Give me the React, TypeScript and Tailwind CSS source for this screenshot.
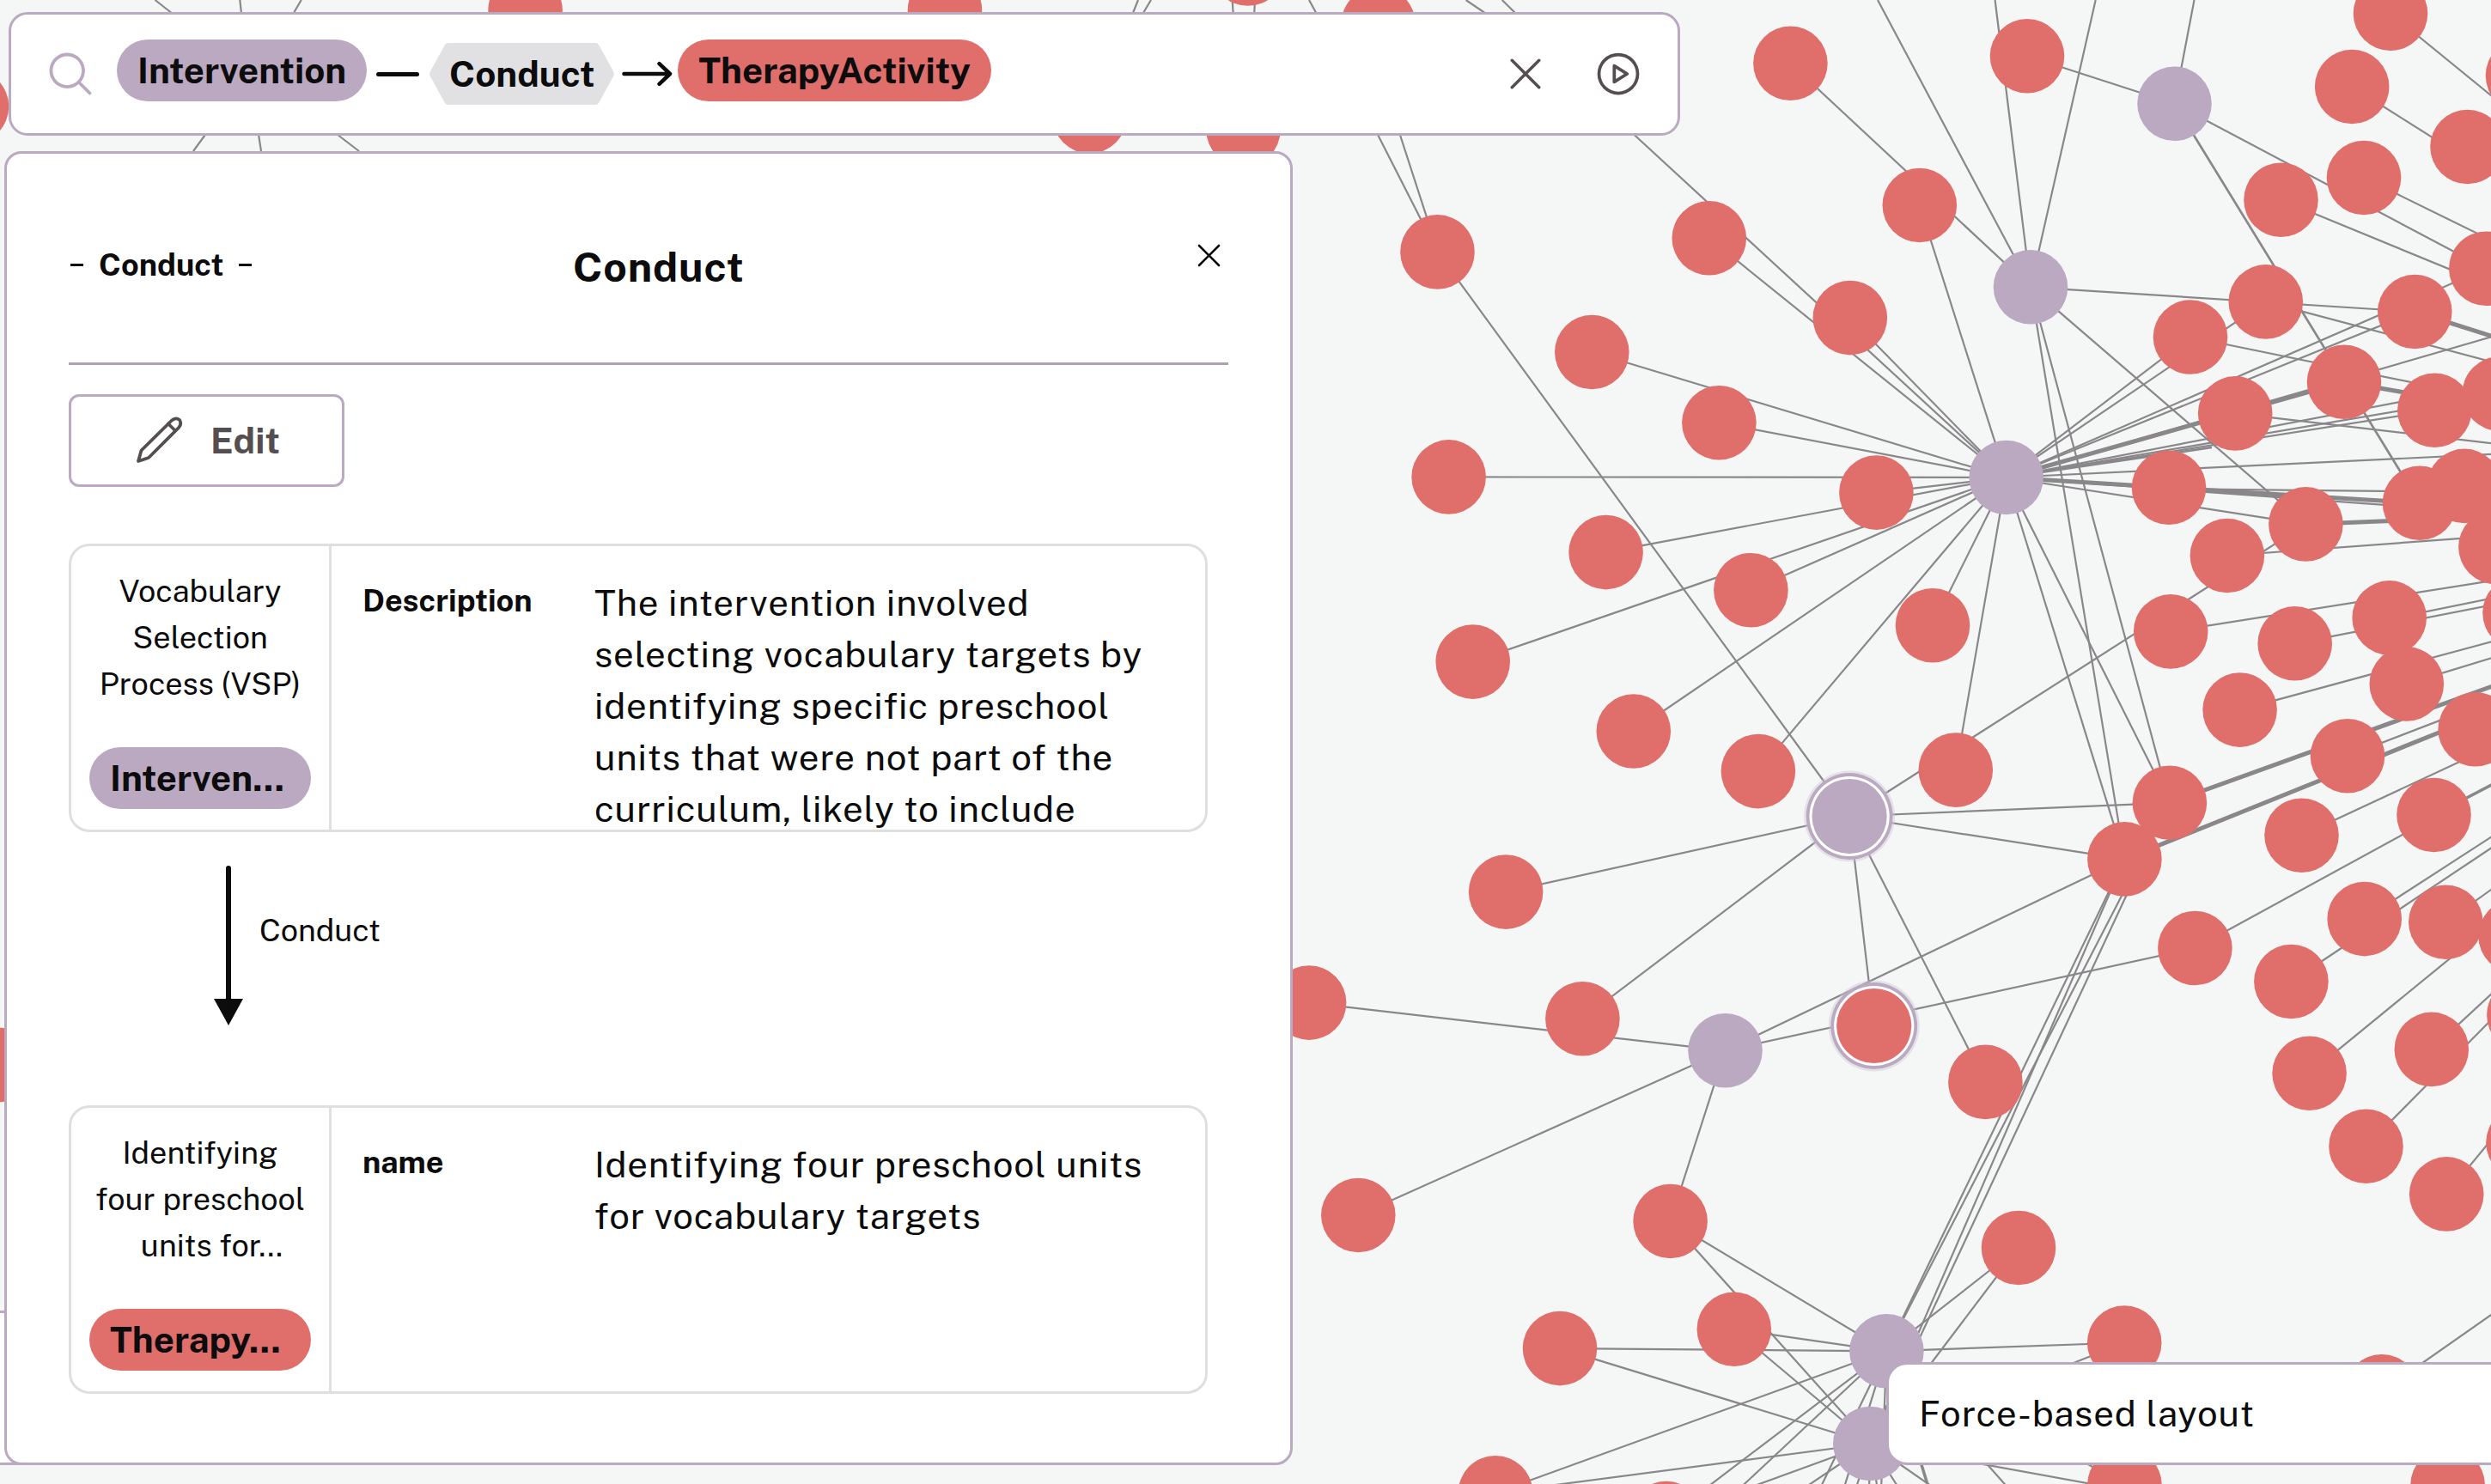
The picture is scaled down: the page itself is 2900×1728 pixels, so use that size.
import React from 'react';
import { PiMagnifyingGlass, PiPlayCircle, PiX } from 'react-icons/pi';

type Point = [number, number];
type Edge = [number, number, number, number, number?];

const RADIUS = 43.3;

const interventions: Point[] = [
  [2531.5, 120.8],
  [2364, 334.3],
  [2335.7, 556],
  [2008.5, 1223.3],
  [2196.4, 1573.3],
  [2177.3, 1681],
];

const activities: Point[] = [
  [-33, 124], [1, 1240], [611.6, 12], [1100, 12], [1452.8, -36.5], [1604.6, 28],
  [1268.5, 135.5], [1447.5, 151], [1673.5, 293.4], [1853.3, 410], [1989.8, 277.3],
  [2084.4, 73.8], [2360, 65.3], [2783, 15.7], [2738.2, 101], [2872.5, 171],
  [2937, 88], [2752, 207], [2655.5, 232.7], [2234.8, 239], [2637.8, 351.4],
  [2550, 392.5], [2811.3, 363], [2894.3, 312.7], [2153.8, 370.1], [2001.4, 492.3],
  [1686.6, 555.4], [1869.6, 643.1], [2184.4, 573.6], [2038.4, 687.2], [1714.7, 770.6],
  [1901.8, 851.5], [2046.9, 898.1], [1753.1, 1038.6], [2602.2, 481.4], [2729, 444.8],
  [2834.3, 477.8], [2909.7, 458.5], [2525, 567.8], [2684.4, 610.4], [2817, 585.8],
  [2869, 565.9], [2592.9, 647], [2905.4, 637], [2250, 728.2], [2527.2, 735.4],
  [2671.7, 749.3], [2781.7, 719.4], [2933.5, 713.6], [2801.8, 796.4], [2607.6, 826.6],
  [2276.8, 896.6], [2733, 880.2], [2881.7, 849.2], [2525.9, 934.8], [2473.4, 1000.4],
  [2679.5, 972.7], [2833.5, 949], [2555.4, 1104], [2667.4, 1143], [2752.7, 1070.1],
  [2847.3, 1073.8], [2928.6, 1090], [2311.4, 1259.9], [2688.6, 1249.8], [2830.8, 1221.9],
  [2938.4, 1182], [2754.5, 1334.8], [2848.2, 1390.4], [2937.5, 1330.5], [2350, 1453],
  [2473.2, 1563.5], [2772.8, 1620.3], [2473.4, 1729], [2849.6, 1729], [1524.1, 1167.6],
  [1842.4, 1186.2], [1581.3, 1415], [1944.6, 1422], [2018.8, 1547.8], [1816, 1570.1],
  [1741, 1738.2], [1939.7, 1768],
];

const edges: Edge[] = [
  // behind the search bar
  [180.5, 0, 206, 20], [279.3, 0, 281.5, 20], [350.8, 0, 339, 20],
  [244, 150, 225, 176], [300, 150, 304, 176], [384, 150, 418, 176],
  [1325, 0, 1317, 20], [1340, 0, 1328, 20], [1434.6, 0, 1436, 20], [1461, 0, 1460, 20],
  [1524, 0, 1535, 20], [1706.6, 0, 1736, 20], [1748.7, 0, 1769, 20],
  [1600, 149, 1673.5, 293.4], [1626, 145, 1674, 293],
  // upper right cluster
  [2531.5, 120.8, 2360, 65.3], [2531.5, 120.8, 2554.5, 0], [2531.5, 120.8, 2894.3, 312.7],
  [2531.5, 120.8, 2817, 585.8, 2.7], [2752, 207, 2970, 314], [2783, 15.7, 2960, 160],
  [2738.2, 101, 2960, 241], [2655.5, 232.7, 2960, 358],
  // second intervention
  [2364, 334.3, 2186, 0], [2364, 334.3, 2322.6, 0], [2364, 334.3, 2439.7, 0],
  [2364, 334.3, 2084.4, 73.8], [2364, 334.3, 2811.3, 363], [2364, 334.3, 2684.4, 610.4],
  [2364, 334.3, 2473.4, 1000.4], [2364, 334.3, 2525.9, 934.8],
  // main hub, left side
  [2335.7, 556, 2234.8, 239], [2335.7, 556, 1989.8, 277.3], [2335.7, 556, 1882, 138],
  [2335.7, 556, 2153.8, 370.1], [2335.7, 556, 1853.3, 410], [2335.7, 556, 2001.4, 492.3],
  [2335.7, 556, 1686.6, 555.4], [2335.7, 556, 1869.6, 643.1], [2335.7, 556, 2184.4, 573.6],
  [2335.7, 556, 1714.7, 770.6], [2335.7, 556, 2038.4, 687.2], [2335.7, 556, 1901.8, 851.5],
  [2335.7, 556, 2046.9, 898.1], [2335.7, 556, 2250, 728.2], [2335.7, 556, 2276.8, 896.6],
  [2335.7, 556, 2473.4, 1000.4], [2335.7, 556, 2525.9, 934.8],
  // main hub, right side
  [2335.7, 556, 2550, 392.5], [2335.7, 556, 2637.8, 351.4], [2335.7, 556, 2894.3, 312.7],
  [2335.7, 556, 2811.3, 363], [2335.7, 556, 2960, 375], [2335.7, 556, 2729, 444.8, 5],
  [2335.7, 556, 2960, 436], [2335.7, 556, 2909.7, 458.5], [2335.7, 556, 2834.3, 477.8],
  [2335.7, 556, 2575, 521, 2.5], [2335.7, 556, 2960, 526], [2335.7, 556, 2817, 585.8, 5],
  [2335.7, 556, 2817, 591], [2335.7, 556, 2684.4, 610.4], [2525, 569.2, 2869, 573],
  [2684.4, 610.4, 2900, 602, 5], [2602.2, 481.4, 2960, 523], [2729, 444.8, 2909.7, 476, 5],
  [2550, 392.5, 2909.7, 466], [2637.8, 351.4, 2960, 437], [2811.3, 363, 2960, 410, 5],
  // right cluster
  [2592.9, 647, 2960, 620], [2527.2, 735.4, 2960, 667], [2671.7, 749.3, 2960, 693],
  [2781.7, 721, 2960, 684.5], [2607.6, 826.6, 2960, 731], [2801.8, 796.4, 2960, 748],
  [2525.9, 934.8, 2960, 778, 5], [2733, 880.2, 2960, 793], [2473.4, 1000.4, 2881.7, 836, 5],
  [2679.5, 972.7, 2960, 842], [2833.5, 949, 2960, 883, 3.5], [2555.4, 1104, 2833.5, 952],
  [2667.4, 1143, 2960, 947.5], [2752.7, 1070.1, 2960, 936], [2847.3, 1073.8, 2960, 993],
  [2688.6, 1249.8, 2960, 1028], [2830.8, 1221.9, 2960, 1102], [2754.5, 1334.8, 2938.4, 1149],
  [2848.2, 1390.4, 2940, 1279], [2772.8, 1620.3, 2960, 1489],
  // selected intervention
  [2153.1, 950.5, 1673.5, 293.4], [2153.1, 950.5, 1753.1, 1038.6], [2153.1, 950.5, 1842.4, 1186.2],
  [2153.1, 950.5, 2181.7, 1194.5], [2153.1, 950.5, 2311.4, 1259.9], [2153.1, 950.5, 2473.4, 1000.4],
  [2153.1, 950.5, 2525.9, 934.8], [2153.1, 950.5, 2684.4, 610.4],
  // lower interventions
  [2008.5, 1223.3, 1524.1, 1167.6], [2008.5, 1223.3, 1581.3, 1415], [2008.5, 1223.3, 1944.6, 1422],
  [2008.5, 1223.3, 2555.4, 1104], [2008.5, 1223.3, 2473.4, 1000.4],
  [2196.4, 1573.3, 1944.6, 1422], [2196.4, 1573.3, 2018.8, 1547.8], [2196.4, 1573.3, 1816, 1570.1],
  [2196.4, 1573.3, 1741, 1738.2], [2196.4, 1573.3, 1939.7, 1768], [2196.4, 1573.3, 1988, 1768],
  [2196.4, 1573.3, 2118, 1735], [2196.4, 1573.3, 2146, 1735], [2196.4, 1573.3, 2190, 1735],
  [2196.4, 1573.3, 2350, 1453], [2196.4, 1573.3, 2473.2, 1563.5], [2196.4, 1573.3, 2473.4, 1000.4],
  [2196.4, 1573.3, 2525.9, 934.8], [2196.4, 1573.3, 2473.4, 1729], [2196.4, 1573.3, 2340, 1735],
  [2196.4, 1573.3, 2246, 1735, 3.5],
  [2177.3, 1681, 1944.6, 1422], [2177.3, 1681, 2018.8, 1547.8], [2177.3, 1681, 1816, 1570.1],
  [2177.3, 1681, 1741, 1738.2], [2177.3, 1681, 2040, 1731], [2177.3, 1681, 2100, 1733],
  [2177.3, 1681, 2350, 1453], [2177.3, 1681, 2473.2, 1563.5], [2177.3, 1681, 2473.4, 1000.4],
  [2177.3, 1681, 2525.9, 934.8], [2177.3, 1681, 2255, 1735], [2177.3, 1681, 2473.4, 1735],
  [2177.3, 1681, 2212, 1735], [2177.3, 1681, 2160, 1735], [2177.3, 1681, 2176, 1735], [2177.3, 1681, 2186, 1735],
];

function Graph() {
  return (
    <svg className="absolute inset-0" width={2900} height={1728} viewBox="0 0 2900 1728">
      <g stroke="#89878a">
        {edges.map(([x1, y1, x2, y2, w = 2.2], i) => (
          <line key={i} x1={x1} y1={y1} x2={x2} y2={y2} strokeWidth={w} />
        ))}
      </g>
      {activities.map(([x, y], i) => (
        <circle key={i} cx={x} cy={y} r={RADIUS} fill="#e06e6b" />
      ))}
      {interventions.map(([x, y], i) => (
        <circle key={i} cx={x} cy={y} r={RADIUS} fill="#baa9c1" />
      ))}
      <SelectedNode x={2153.1} y={950.5} color="#baa9c1" />
      <SelectedNode x={2181.7} y={1194.5} color="#e06e6b" />
    </svg>
  );
}

function SelectedNode({ x, y, color }: { x: number; y: number; color: string }) {
  return (
    <g>
      <circle cx={x} cy={y} r={53} fill="#cfc8d3" opacity={0.45} />
      <circle cx={x} cy={y} r={50.4} fill="#baa9c1" />
      <circle cx={x} cy={y} r={46.6} fill="#ffffff" />
      <circle cx={x} cy={y} r={43.6} fill={color} />
    </g>
  );
}

function SearchBar() {
  return (
    <div className="absolute left-[10px] top-[14px] flex h-[144px] w-[1946px] items-center rounded-[22px] border-[3px] border-[#baa9c1] bg-white pl-[39px] pr-[39px] text-[42px] font-bold leading-none">
      <PiMagnifyingGlass size={60} color="#baa9c1" />
      <div className="-mt-2 ml-6 flex h-[72px] items-center rounded-full bg-[#baa9c1] px-6">Intervention</div>
      <div className="ml-[11px] h-[5px] w-[50px] rounded-full bg-[#0c0c0d]" />
      <div className="relative ml-[12px] flex h-[72px] w-[215px] items-center justify-center">
        <svg className="absolute inset-0" width={215} height={72} viewBox="0 0 215 72">
          <path d="M22 0H193Q196 0 197.500 3L214 33Q215.500 36 214 39L197.500 69Q196 72 193 72H22Q19 72 17.500 69L1 39Q-.5 36 1 33L17.500 3Q19 0 22 0Z" fill="#e1e0e2" />
        </svg>
        <span className="relative">Conduct</span>
      </div>
      <svg className="ml-[8px]" width={60} height={32} viewBox="0 0 60 32" fill="none" stroke="#0c0c0d" strokeWidth={4.5} strokeLinecap="round" strokeLinejoin="round">
        <path d="M3.500 16H57M44.500 4.200L57 16L44.500 27.800" />
      </svg>
      <div className="-mt-2 ml-[6px] flex h-[72px] items-center rounded-full bg-[#e06e6b] px-6">TherapyActivity</div>
      <PiX className="ml-auto" size={56} color="#544e50" />
      <PiPlayCircle className="ml-[50px]" size={60} color="#544e50" />
    </div>
  );
}

type EntityProps = {
  title: React.ReactNode;
  tag: string;
  tagClass: string;
  field: string;
  children: React.ReactNode;
};

function EntityCard({ title, tag, tagClass, field, children }: EntityProps) {
  return (
    <div className="flex h-[336px] w-[1326px] overflow-hidden rounded-[24px] border-[3px] border-[#dfdfdf]">
      <div className="flex w-[303px] shrink-0 flex-col justify-between border-r-[3px] border-[#dfdfdf] pb-[24px] pl-[21px] pr-[21px] pt-[25px]">
        <div className="text-center text-[36px] leading-[54px] whitespace-nowrap">{title}</div>
        <div className={`flex h-[72px] w-[258px] items-center rounded-full px-6 text-[42px] font-bold leading-none ${tagClass}`}>{tag}</div>
      </div>
      <div className="w-[270px] shrink-0 pl-[36px] pt-[36px] text-[36px] font-bold leading-[54px]">{field}</div>
      <div className="whitespace-nowrap pl-[36px] pt-[36px] text-[42px] leading-[60px] tracking-[0.8px]">{children}</div>
    </div>
  );
}

function DetailPanel() {
  return (
    <div className="absolute left-[5px] top-[176px] flex h-[1530px] w-[1500px] flex-col rounded-[20px] border-[3px] border-[#baa9c1] bg-white pl-[72px] pr-[72px]">
      <div className="flex h-[246px] w-[1350px] shrink-0 items-start border-b-[3px] border-[#ada0b1] pl-[2px]">
        <div className="mt-[99px] flex h-[60px] w-[585px] items-center gap-[18px] text-[36px] font-bold">
          <span className="h-[3px] w-[15px] bg-[#0c0c0d]" />
          <span>Conduct</span>
          <span className="h-[3px] w-[15px] bg-[#0c0c0d]" />
        </div>
        <h2 className="mt-[102px] text-[48px] font-bold leading-[60px] tracking-[0.8px]">Conduct</h2>
        <PiX className="ml-auto mr-[2px] mt-[98px]" size={41} />
      </div>
      <button className="mt-[34px] flex h-[108px] w-[321px] shrink-0 items-center rounded-[12px] border-[3px] border-[#baa9c1] pl-[73px] text-[42px] font-bold text-[#544e50]">
        <svg width={58} height={58} viewBox="0 0 58 58" fill="none" stroke="#544e50" strokeWidth={3.8} strokeLinecap="round" strokeLinejoin="round">
          <path d="M5 53L8.500 40.500L44 5.500Q48.500 1.500 53 5Q56 9.500 52 14L17 49Z" />
          <path d="M40 9.500L48 17.500" />
        </svg>
        <span className="-mt-[2px] ml-[31px]">Edit</span>
      </button>
      <div className="mt-[66px]">
        <EntityCard
          title={<>Vocabulary<br />Selection<br />Process (VSP)</>}
          tag="Interven..."
          tagClass="bg-[#baa9c1]"
          field="Description"
        >
          The intervention involved<br />
          selecting vocabulary targets by<br />
          identifying specific preschool<br />
          units that were not part of the<br />
          curriculum, likely to include
        </EntityCard>
      </div>
      <div className="flex h-[318px] items-start pl-[168px] pt-[38px]">
        <svg width={36} height={190} viewBox="0 0 36 190">
          <path d="M18 4V158" stroke="#0c0c0d" strokeWidth={6} strokeLinecap="round" />
          <path d="M1 156H35L18 187Z" fill="#0c0c0d" />
        </svg>
        <span className="ml-[18px] mt-[49px] text-[36px] leading-[54px]">Conduct</span>
      </div>
      <EntityCard
        title={<>Identifying<br />four preschool<br /><span className="pl-[27px]">units for...</span></>}
        tag="Therapy..."
        tagClass="bg-[#e06e6b]"
        field="name"
      >
        Identifying four preschool units<br />
        for vocabulary targets
      </EntityCard>
    </div>
  );
}

export default function App() {
  return (
    <div className="relative h-[1728px] w-[2900px] overflow-hidden bg-[#f5f7f7] font-['Public_Sans','Inter',sans-serif] text-[#0c0c0d]">
      <Graph />
      <div className="absolute -left-[40px] top-[1526px] h-[180px] w-[90px] border-[3px] border-[#baa9c1] bg-white" />
      <SearchBar />
      <DetailPanel />
      <div className="absolute left-[2196px] top-[1586px] flex h-[120px] w-[760px] items-center rounded-[24px] border-[3px] border-[#baa9c1] bg-white pb-[2px] pl-[35px] text-[42px] tracking-[0.8px]">
        Force-based layout
      </div>
    </div>
  );
}
